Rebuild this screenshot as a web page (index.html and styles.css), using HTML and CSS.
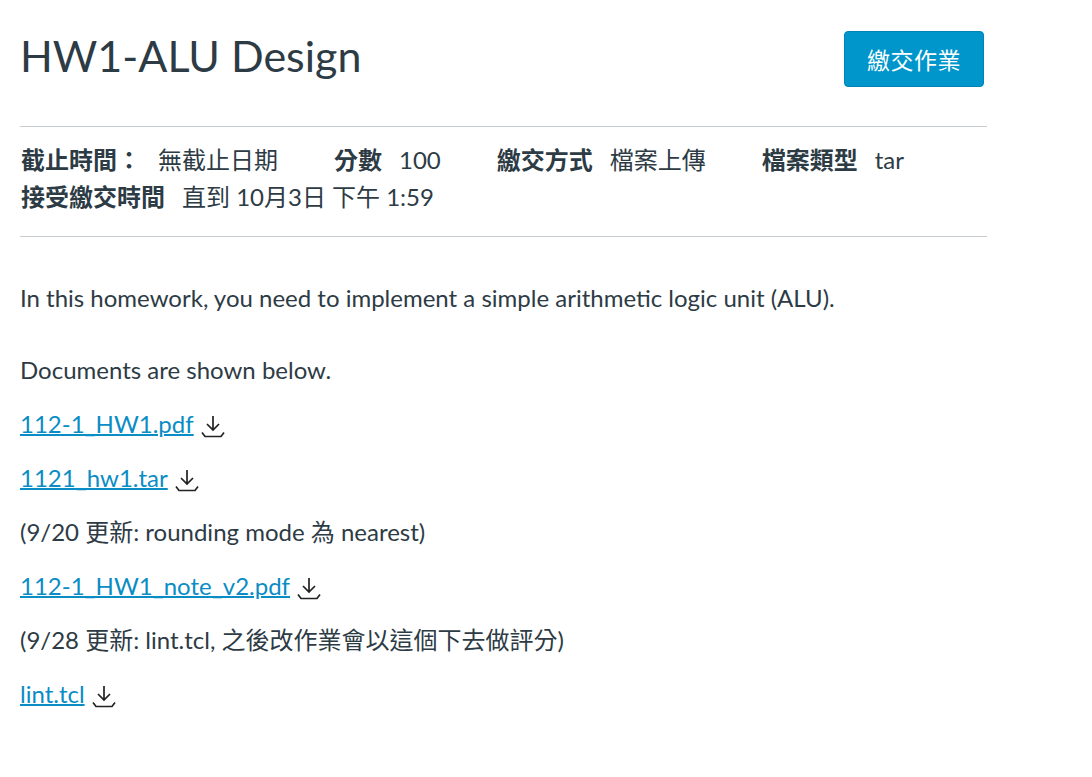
FILE: index.html
```html
<!DOCTYPE html>
<html lang="zh-Hant">
<head>
<meta charset="utf-8">
<title>HW1-ALU Design</title>
<link rel="stylesheet" href="styles.css">
</head>
<body>
<div class="page">
  <header class="header">
    <h1 class="title">HW1-ALU Design</h1>
    <button class="submit-btn">繳交作業</button>
  </header>
  <hr class="rule">
  <div class="details">
    <div class="details-row">
      <span class="item"><b class="label">截止時間：</b><span class="value">無截止日期</span></span>
      <span class="item"><b class="label">分數</b><span class="value">100</span></span>
      <span class="item"><b class="label">繳交方式</b><span class="value">檔案上傳</span></span>
      <span class="item"><b class="label">檔案類型</b><span class="value">tar</span></span>
    </div>
    <div class="details-row">
      <span class="item"><b class="label">接受繳交時間</b><span class="value">直到 10月3日 下午 1:59</span></span>
    </div>
  </div>
  <hr class="rule">
  <div class="description">
    <p class="intro">In this homework, you need to implement a simple arithmetic logic unit (ALU).</p>
    <p>Documents are shown below.</p>
    <p><a href="#">112-1_HW1.pdf</a><svg class="dl" viewBox="0 0 24 24" width="24" height="24"><path d="M12 2v14M6 10l6 6 6-6M1 18.5l3 4h16l3-4" fill="none" stroke="#222" stroke-width="1.7"/></svg></p>
    <p><a href="#">1121_hw1.tar</a><svg class="dl" viewBox="0 0 24 24" width="24" height="24"><path d="M12 2v14M6 10l6 6 6-6M1 18.5l3 4h16l3-4" fill="none" stroke="#222" stroke-width="1.7"/></svg></p>
    <p>(9/20 更新: rounding mode 為 nearest)</p>
    <p><a href="#">112-1_HW1_note_v2.pdf</a><svg class="dl" viewBox="0 0 24 24" width="24" height="24"><path d="M12 2v14M6 10l6 6 6-6M1 18.5l3 4h16l3-4" fill="none" stroke="#222" stroke-width="1.7"/></svg></p>
    <p>(9/28 更新: lint.tcl, 之後改作業會以這個下去做評分)</p>
    <p><a href="#">lint.tcl</a><svg class="dl" viewBox="0 0 24 24" width="24" height="24"><path d="M12 2v14M6 10l6 6 6-6M1 18.5l3 4h16l3-4" fill="none" stroke="#222" stroke-width="1.7"/></svg></p>
  </div>
</div>
</body>
</html>
```

FILE: styles.css
```css
html, body {
  margin: 0;
  padding: 0;
  background: #fff;
}
body {
  font-family: Lato, "Noto Sans CJK TC", sans-serif;
  color: #2d3b45;
  font-size: 24px;
}
.page {
  width: 967px;
  padding: 20px 0 0 20px;
}
.header {
  display: flex;
  justify-content: space-between;
  align-items: flex-start;
  height: 96px;
}
.title {
  margin: 9px 0 0 0;
  font-size: 43px;
  font-weight: 400;
  line-height: 54px;
  color: #2d3b45;
}
.submit-btn {
  margin: 11px 3px 0 0;
  width: 140px;
  height: 56px;
  background: #0096cc;
  border: 1px solid #0084b5;
  border-radius: 4px;
  color: #fff;
  font-family: Lato, "Noto Sans CJK TC", sans-serif;
  font-size: 23px;
  padding: 0;
  letter-spacing: 0.5px;
}
.rule {
  margin: 10px 0;
  border: 0;
  border-top: 1px solid #c7cdd1;
  height: 0;
}
.details {
  padding: 4px 0 11px 1px;
}
.details-row {
  display: flex;
  gap: 0 56px;
  line-height: 37px;
}
.label {
  font-weight: 700;
  margin-right: 17px;
}
.value {
  font-weight: 400;
}
.description {
  padding-top: 34px;
}
.description p {
  margin: 0 0 21px;
  line-height: 33px;
  display: flex;
  align-items: center;
}
.description p.intro {
  margin-bottom: 39px;
}
.description a {
  color: #0a8cc4;
  text-decoration: underline;
  text-decoration-thickness: 2px;
}
.dl {
  margin-left: 7px;
  position: relative;
  top: 2px;
}
```
